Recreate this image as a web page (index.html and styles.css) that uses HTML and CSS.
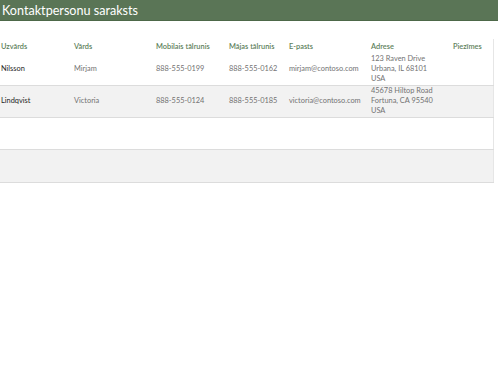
FILE: index.html
```html
<!DOCTYPE html>
<html lang="lv">
<head>
  <meta charset="UTF-8" />
  <title>Kontaktpersonu saraksts</title>
  <link rel="stylesheet" href="styles.css">
</head>
<body>
  <header class="title-bar">
    <h1>Kontaktpersonu saraksts</h1>
  </header>

  <table class="contacts">
    <colgroup>
      <col class="c-last">
      <col class="c-first">
      <col class="c-mobile">
      <col class="c-home">
      <col class="c-mail">
      <col class="c-addr">
      <col class="c-notes">
    </colgroup>
    <thead>
      <tr>
        <th>Uzvārds</th>
        <th>Vārds</th>
        <th>Mobilais tālrunis</th>
        <th>Mājas tālrunis</th>
        <th>E-pasts</th>
        <th>Adrese</th>
        <th>Piezīmes</th>
      </tr>
    </thead>
    <tbody>
      <tr>
        <td class="name">Nilsson</td>
        <td>Mirjam</td>
        <td>888-555-0199</td>
        <td>888-555-0162</td>
        <td>mirjam@contoso.com</td>
        <td>123 Raven Drive<br>Urbana, IL 68101<br>USA</td>
        <td></td>
      </tr>
      <tr>
        <td class="name">Lindqvist</td>
        <td>Victoria</td>
        <td>888-555-0124</td>
        <td>888-555-0185</td>
        <td>victoria@contoso.com</td>
        <td>45678 Hiltop Road<br>Fortuna, CA 95540<br>USA</td>
        <td></td>
      </tr>
      <tr>
        <td class="name"></td><td></td><td></td><td></td><td></td><td></td><td></td>
      </tr>
      <tr>
        <td class="name"></td><td></td><td></td><td></td><td></td><td></td><td></td>
      </tr>
    </tbody>
  </table>
</body>
</html>
```

FILE: styles.css
```css
* {
  margin: 0;
  padding: 0;
  box-sizing: border-box;
}
body {
  background-color: #fff;
  font-family: Lato, "Open Sans", sans-serif;
  color: #737373;
}
.title-bar {
  height: 21px;
  background-color: #5a7556;
  border-bottom: 1px solid #4d6849;
  padding-left: 2px;
}
.title-bar h1 {
  font-weight: normal;
  font-size: 12.6px;
  line-height: 21px;
  color: #fff;
}
.contacts {
  margin-top: 18px;
  width: 494px;
  border-collapse: collapse;
  table-layout: fixed;
  border-right: 1px solid #e6e6e6;
  font-size: 7.4px;
}
.c-last { width: 73px; }
.c-first { width: 82px; }
.c-mobile { width: 73px; }
.c-home { width: 60px; }
.c-mail { width: 82px; }
.c-addr { width: 82px; }
.contacts th {
  text-align: left;
  font-weight: 600;
  color: #5e7f5c;
  height: 14px;
  padding-left: 1px;
  vertical-align: middle;
}
.contacts td {
  height: 32.3px;
  padding-left: 1px;
  vertical-align: middle;
  line-height: 10px;
  border-bottom: 1px solid #dcdcdc;
  white-space: nowrap;
}
.contacts tbody tr:nth-child(even) {
  background-color: #f2f2f2;
}
.contacts td.name {
  color: #262626;
}
```
